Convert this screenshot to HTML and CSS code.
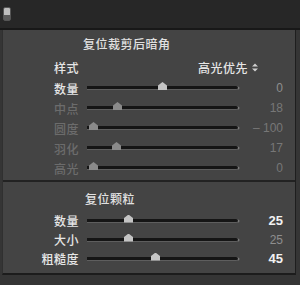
FILE: index.html
```html
<!DOCTYPE html>
<html lang="zh-CN">
<head>
  <meta charset="UTF-8">
  <meta name="viewport" content="width=device-width, initial-scale=1.0">
  <title>效果面板</title>
  <link rel="stylesheet" href="styles.css">
</head>
<body>
  <div class="topbar">
    <span class="doc-icon"></span>
  </div>

  <div class="panel">
    <section class="group">
      <div class="group-title">复位裁剪后暗角</div>
      <div class="style-row">
        <span class="label">样式</span>
        <span class="select">高光优先
          <svg class="updown" width="6" height="9" viewBox="0 0 6 9">
            <path d="M0 3.5 L3 0.5 L6 3.5 Z M0 5.5 L3 8.5 L6 5.5 Z" fill="#cfcfcf"/>
          </svg>
        </span>
      </div>
      <div class="slider-row">
        <span class="label">数量</span>
        <div class="track"><span class="thumb" style="left: 75px"></span></div>
        <span class="value dim">0</span>
      </div>
      <div class="slider-row off">
        <span class="label">中点</span>
        <div class="track"><span class="thumb" style="left: 30px"></span></div>
        <span class="value">18</span>
      </div>
      <div class="slider-row off">
        <span class="label">圆度</span>
        <div class="track"><span class="thumb" style="left: 6px"></span></div>
        <span class="value">– 100</span>
      </div>
      <div class="slider-row off">
        <span class="label">羽化</span>
        <div class="track"><span class="thumb" style="left: 29px"></span></div>
        <span class="value">17</span>
      </div>
      <div class="slider-row off">
        <span class="label">高光</span>
        <div class="track"><span class="thumb" style="left: 6px"></span></div>
        <span class="value">0</span>
      </div>
    </section>

    <section class="group grain">
      <div class="group-title">复位颗粒</div>
      <div class="slider-row">
        <span class="label">数量</span>
        <div class="track"><span class="thumb" style="left: 41px"></span></div>
        <span class="value strong">25</span>
      </div>
      <div class="slider-row">
        <span class="label">大小</span>
        <div class="track"><span class="thumb" style="left: 41px"></span></div>
        <span class="value dim">25</span>
      </div>
      <div class="slider-row">
        <span class="label">粗糙度</span>
        <div class="track"><span class="thumb" style="left: 68px"></span></div>
        <span class="value strong">45</span>
      </div>
    </section>
  </div>

  <div class="footer"></div>
</body>
</html>
```

FILE: styles.css
```css
body {
  margin: 0;
  width: 300px;
  height: 285px;
  overflow: hidden;
  background: #353535;
  color: #e6e6e6;
  font-family: "Noto Sans CJK SC", "Noto Sans", sans-serif;
  font-size: 12px;
}
.topbar {
  height: 28px;
  background: #272727;
  border-bottom: 2px solid #181818;
  position: relative;
}
.doc-icon {
  position: absolute;
  left: 3px;
  top: 7px;
  width: 6px;
  height: 12px;
  border-radius: 2px;
  border: 1px solid #555;
  background: linear-gradient(#bdbdbd 0 55%, #5a5a5a 55%);
}
.panel {
  margin-left: 2px;
  width: 292px;
  background: #444;
  border-left: 1px solid #303030;
  border-right: 1px solid #1e1e1e;
  border-bottom: 2px solid #1c1c1c;
  padding-bottom: 5px;
}
.group {
  padding-top: 6px;
  padding-bottom: 2px;
  border-bottom: 2px solid #222;
}
.group.grain {
  padding-top: 9px;
  padding-bottom: 0;
  border-bottom: none;
}
.group-title {
  height: 16px;
  line-height: 16px;
  padding-left: 80px;
  letter-spacing: 0.5px;
  color: #e0e0e0;
  font-weight: 500;
}
.grain .group-title {
  padding-left: 82px;
  margin-bottom: 4px;
}
.label {
  width: 76px;
  text-align: right;
  letter-spacing: 0.5px;
  flex-shrink: 0;
  font-weight: 500;
}
.style-row {
  display: flex;
  align-items: center;
  height: 18px;
  margin-top: 6px;
  margin-bottom: 2px;
}
.select {
  margin-left: 119px;
  letter-spacing: 0.5px;
  font-weight: 500;
  display: flex;
  align-items: center;
}
.updown {
  margin-left: 4px;
}
.slider-row {
  display: flex;
  align-items: center;
  height: 20px;
}
.grain .slider-row {
  height: 19px;
}
.track {
  position: relative;
  margin-left: 8px;
  width: 151px;
  height: 3px;
  background: #151515;
  border-bottom: 1px solid #5e5e5e;
  border-radius: 0 2px 2px 0;
  box-shadow: 2px 0 0 -0.5px #7a7a7a;
}
.thumb {
  position: absolute;
  top: -4px;
  width: 9px;
  height: 8px;
  margin-left: -4px;
  background: #c4c4c4;
  clip-path: polygon(50% 0, 100% 45%, 100% 100%, 0 100%, 0 45%);
}
.value {
  width: 45px;
  text-align: right;
  font-family: "Liberation Sans", "DejaVu Sans", sans-serif;
  font-size: 12px;
  color: #777;
}
.value.dim {
  color: #8e8e8e;
}
.value.strong {
  color: #f2f2f2;
  font-weight: bold;
  font-size: 13px;
}
.off .label {
  color: #6c6c6c;
}
.off .thumb {
  background: #8a8a8a;
}
.footer {
  height: 10px;
  background: #353535;
}
```
